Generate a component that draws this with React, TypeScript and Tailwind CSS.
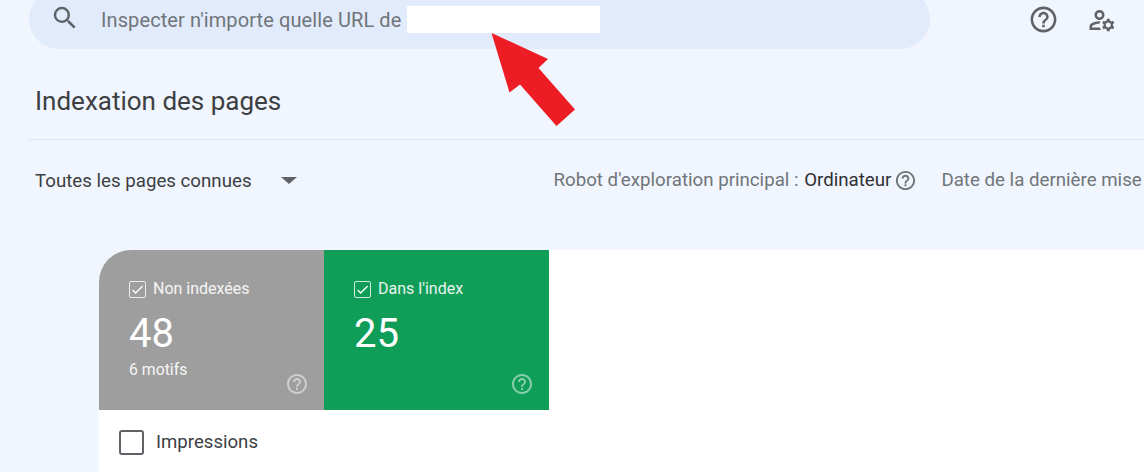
import { MdSearch, MdHelpOutline, MdOutlineManageAccounts, MdCheck } from 'react-icons/md'

function MetricCard({ label, value, sub, color, rounded }: { label: string; value: string; sub?: string; color: string; rounded?: boolean }) {
  return (
    <div className={`relative w-[225px] h-[160px] pl-[30px] pt-[30px] text-white ${color} ${rounded ? 'rounded-tl-[32px]' : ''}`}>
      <div className="flex items-center gap-[7px] h-[18px]">
        <span className="flex items-center justify-center w-[17px] h-[17px] rounded-[2px] border border-white/80">
          <MdCheck size={15} />
        </span>
        <span className="text-[16px] text-white/90">{label}</span>
      </div>
      <div className="text-[40px] leading-[44px] mt-[14px]">{value}</div>
      {sub && <div className="text-[15.8px] leading-[18px] mt-[5px] text-white/90">{sub}</div>}
      <MdHelpOutline size={24} className="absolute right-[15px] bottom-[14px] text-white/50" />
    </div>
  )
}

export default function App() {
  return (
    <div className="relative w-[1144px] h-[472px] overflow-hidden bg-[#f1f5fd] font-['Roboto',sans-serif]">
      {/* Top bar */}
      <div className="flex items-start h-[49px]">
        <div className="flex items-center ml-[29px] w-[901px] h-[60px] -mt-[11px] rounded-[30px] bg-[#e1ebfb]">
          <MdSearch size={30} className="ml-[21px] -mt-[2px] text-[#5f6368]" />
          <span className="ml-[21px] mt-[2px] text-[20px] tracking-[0.1px] text-[#70757a]">Inspecter n'importe quelle URL de</span>
          <span className="ml-[6px] mt-[1px] w-[193px] h-[27px] bg-white" />
        </div>
        <MdHelpOutline size={31} className="ml-[98px] mt-[4px] text-[#5f6368]" />
        <MdOutlineManageAccounts size={30} className="ml-[28px] mt-[5px] text-[#5f6368]" />
      </div>

      {/* Title */}
      <h1 className="ml-[35px] mt-[37px] text-[26px] leading-[30px] text-[#3c4043]">Indexation des pages</h1>
      <div className="ml-[29px] mt-[23px] h-px bg-[#dfe3ea]" />

      {/* Filter row */}
      <div className="flex items-center h-[80px] ml-[35px] whitespace-nowrap">
        <span className="mt-[2px] text-[18.7px] text-[#3c4043]">Toutes les pages connues</span>
        <span className="ml-[29px] w-0 h-0 border-x-[8px] border-x-transparent border-t-[7px] border-t-[#5f6368]" />
        <span className="ml-[257px] text-[18.7px] text-[#70757a]">Robot d'exploration principal : <span className="ml-px text-[#303134]">Ordinateur</span></span>
        <MdHelpOutline size={23} className="ml-[3px] shrink-0 text-[#70757a]" />
        <span className="ml-[24px] text-[18.7px] text-[#70757a]">Date de la dernière mise</span>
      </div>

      {/* Report panel */}
      <div className="ml-[99px] mt-[30px] h-[222px] bg-white rounded-tl-[32px]">
        <div className="flex">
          <MetricCard label="Non indexées" value="48" sub="6 motifs" color="bg-[#9e9e9e]" rounded />
          <MetricCard label="Dans l'index" value="25" color="bg-[#0f9d58]" />
        </div>
        <div className="flex items-center ml-[20px] mt-[19px]">
          <span className="w-[25px] h-[25px] rounded-[3px] border-2 border-[#5f6368]" />
          <span className="ml-[12px] text-[18.6px] text-[#3c4043]">Impressions</span>
        </div>
      </div>

      {/* Annotation arrow */}
      <svg className="absolute left-[480px] top-[20px]" width="110" height="115" viewBox="0 0 110 115">
        <polygon points="11.5,13 68,39 58.5,48 95,89.5 76.5,106 40,64.5 29.5,72.5" fill="#ee1c25" />
      </svg>
    </div>
  )
}
